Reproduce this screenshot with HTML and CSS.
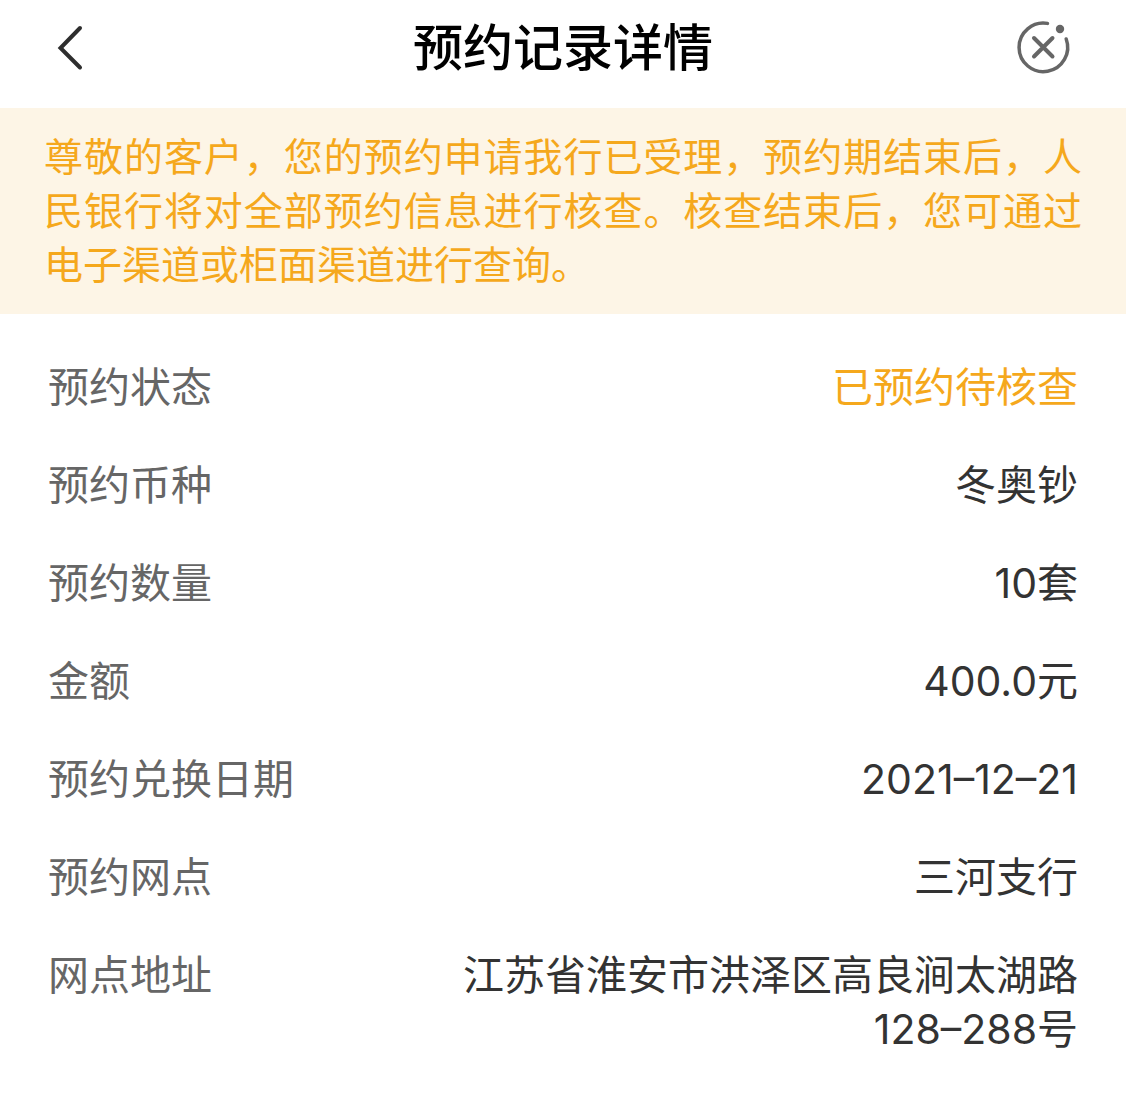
FILE: index.html
```html
<!DOCTYPE html>
<html lang="zh-CN">
<head>
<meta charset="utf-8">
<meta name="viewport" content="width=device-width, initial-scale=1">
<title>预约记录详情</title>
<link rel="stylesheet" href="styles.css">
</head>
<body>
<header class="navbar">
  <button class="nav-button" type="button" aria-label="返回">
    <svg class="nav-icon" viewBox="13 0 60 60" fill="none" stroke="#2e2e2e" stroke-width="4" stroke-linecap="round" stroke-linejoin="miter"><path d="M40 10 20.500 30 40 49.500"/></svg>
  </button>
  <h1 class="navbar-title">预约记录详情</h1>
  <button class="nav-button" type="button" aria-label="关闭">
    <svg class="nav-icon" viewBox="0 0 60 60" fill="none" stroke="#666" stroke-width="3.500" stroke-linecap="round"><path d="M34.500 5.400A24.300 24.300 0 1 0 53.200 21"/><path d="M21 20 39.500 38.500M39.500 20 21 38.500" stroke-width="4"/><circle cx="47" cy="11" r="4.200" fill="#666" stroke="none"/></svg>
  </button>
</header>
<main>
  <p class="notice">尊敬的客户，您的预约申请我行已受理，预约期结束后，人民银行将对全部预约信息进行核查。核查结束后，您可通过电子渠道或柜面渠道进行查询。</p>
  <dl class="details">
    <div class="row"><dt>预约状态</dt><dd class="status">已预约待核查</dd></div>
    <div class="row"><dt>预约币种</dt><dd>冬奥钞</dd></div>
    <div class="row"><dt>预约数量</dt><dd>10套</dd></div>
    <div class="row"><dt>金额</dt><dd>400.0元</dd></div>
    <div class="row"><dt>预约兑换日期</dt><dd>2021–12–21</dd></div>
    <div class="row"><dt>预约网点</dt><dd>三河支行</dd></div>
    <div class="row"><dt>网点地址</dt><dd>江苏省淮安市洪泽区高良涧太湖路128–288号</dd></div>
  </dl>
</main>
</body>
</html>
```

FILE: styles.css
```css
* {
  box-sizing: border-box;
}

body {
  margin: 0;
  background: #fff;
  color: #333;
  font-family: Inter, "Noto Sans CJK SC", sans-serif;
}

.navbar {
  display: flex;
  align-items: center;
  justify-content: space-between;
  height: 108px;
  padding: 0 53px 12px;
}

.nav-button {
  width: 60px;
  height: 60px;
  padding: 0;
  border: 0;
  background: none;
}

.nav-icon {
  display: block;
  width: 60px;
  height: 60px;
}

.navbar-title {
  margin: 0;
  color: #000;
  font-size: 50px;
  font-weight: 500;
  line-height: 60px;
}

.notice {
  margin: 0;
  padding: 22px 44px;
  background: #fdf5e6;
  color: #f5a81c;
  font-size: 39px;
  line-height: 54px;
  text-align: justify;
}

.details {
  display: flex;
  flex-direction: column;
  gap: 44px;
  margin: 0;
  padding: 46px 48px 40px;
  font-size: 41px;
  line-height: 54px;
}

.row {
  display: flex;
  justify-content: space-between;
}

.row dt {
  flex: none;
  color: #666;
}

.row dd {
  max-width: 632px;
  margin: 0;
  text-align: right;
}

.row .status {
  color: #f5a81c;
}
```
